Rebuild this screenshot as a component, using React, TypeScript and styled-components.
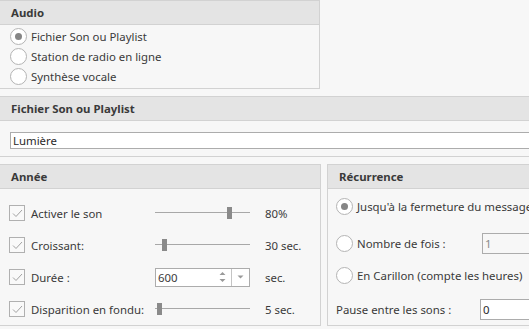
import React from "react";
import styled, { createGlobalStyle } from "styled-components";

const GlobalStyle = createGlobalStyle`
  html, body {
    margin: 0;
    padding: 0;
    background: #f7f7f7;
    overflow: hidden;
  }
  body {
    font-family: "Noto Sans", "Open Sans", sans-serif;
    font-size: 11.4px;
    color: #3a3a3a;
  }
`;

const Page = styled.div`
  width: 700px;
  margin-left: -1px;
  display: flex;
  flex-direction: column;
  gap: 7px;
`;

const Panel = styled.section<{ $width?: number }>`
  width: ${(p) => (p.$width ? `${p.$width}px` : "auto")};
  flex: ${(p) => (p.$width ? "none" : "1")};
  border: 1px solid #d2d2d2;
  background: #f7f7f7;
  box-sizing: border-box;
  overflow: hidden;
`;

const Header = styled.div`
  height: 23px;
  background: #e4e4e4;
  border-bottom: 1px solid #d2d2d2;
  display: flex;
  align-items: center;
  padding-left: 11px;
  font-weight: bold;
  color: #3a3a3a;
  font-size: 11.4px;
`;

const Body = styled.div<{ $pad: string }>`
  padding: ${(p) => p.$pad};
  display: flex;
  flex-direction: column;
`;

const Row = styled.div<{ $h: number; $mt?: number }>`
  height: ${(p) => p.$h}px;
  margin-top: ${(p) => p.$mt ?? 0}px;
  display: flex;
  align-items: center;
  white-space: nowrap;
`;

const Radio = styled.span<{ $on?: boolean }>`
  width: 15px;
  height: 15px;
  border-radius: 50%;
  border: 1px solid #b4b4b4;
  background: #fff;
  flex: none;
  display: flex;
  align-items: center;
  justify-content: center;
  margin-right: 4px;
  &::after {
    content: "";
    width: 7px;
    height: 7px;
    border-radius: 50%;
    background: ${(p) => (p.$on ? "#858585" : "transparent")};
  }
`;

const Check = styled.span`
  width: 14px;
  height: 14px;
  border: 1px solid #b0b0b0;
  background: #f9f9f9;
  flex: none;
  display: flex;
  align-items: center;
  justify-content: center;
  margin-right: 6px;
`;

const Label = styled.span<{ $w?: number }>`
  width: ${(p) => (p.$w ? `${p.$w}px` : "auto")};
  flex: none;
`;

const TextBox = styled.div<{ $w?: number; $disabled?: boolean }>`
  height: 19px;
  width: ${(p) => (p.$w ? `${p.$w}px` : "auto")};
  flex: ${(p) => (p.$w ? "none" : "1")};
  border: 1px solid #acacac;
  background: ${(p) => (p.$disabled ? "#f7f7f7" : "#fff")};
  color: ${(p) => (p.$disabled ? "#8a8a8a" : "#2a2a2a")};
  display: flex;
  align-items: center;
  padding-left: 2px;
`;

const Slider = styled.div`
  position: relative;
  width: 95px;
  height: 14px;
  flex: none;
  &::before {
    content: "";
    position: absolute;
    left: 0;
    right: 0;
    top: 6px;
    height: 1px;
    background: #a8a8a8;
  }
`;

const Thumb = styled.span`
  position: absolute;
  top: 1px;
  width: 5px;
  height: 12px;
  background: #8a8a8a;
`;

const Value = styled.span`
  margin-left: 15px;
`;

const Spin = styled.div`
  width: 93px;
  height: 17px;
  border: 1px solid #acacac;
  background: #fff;
  display: flex;
  align-items: center;
  flex: none;
`;

const SpinText = styled.span`
  flex: 1;
  padding-left: 2px;
`;

const SpinButtons = styled.span`
  width: 18px;
  display: flex;
  justify-content: center;
`;

const DropButton = styled.span`
  width: 17px;
  height: 100%;
  border-left: 1px solid #c4c4c4;
  display: flex;
  align-items: center;
  justify-content: center;
`;

const Columns = styled.div`
  display: flex;
  gap: 6px;
`;

const CheckMark = () => (
  <svg width="11" height="9" viewBox="0 0 11 9">
    <path d="M1 4.5 L4 7.5 L10 1" fill="none" stroke="#a2a2a2" strokeWidth="1" />
  </svg>
);

function SliderRow({ label, pos, value }: { label: string; pos: number; value: string }) {
  return (
    <Row $h={32}>
      <Check>
        <CheckMark />
      </Check>
      <Label $w={124}>{label}</Label>
      <Slider>
        <Thumb style={{ left: pos }} />
      </Slider>
      <Value>{value}</Value>
    </Row>
  );
}

export default function App() {
  return (
    <>
      <GlobalStyle />
      <Page>
        <Panel $width={321} style={{ height: 89 }}>
          <Header>Audio</Header>
          <Body $pad="1px 0 0 10px">
            <Row $h={20}>
              <Radio $on />
              Fichier Son ou Playlist
            </Row>
            <Row $h={20}>
              <Radio />
              Station de radio en ligne
            </Row>
            <Row $h={20}>
              <Radio />
              Synthèse vocale
            </Row>
          </Body>
        </Panel>

        <Panel>
          <Header>Fichier Son ou Playlist</Header>
          <Body $pad="11px 0 7px 10px">
            <TextBox>Lumière</TextBox>
          </Body>
        </Panel>

        <Columns>
          <Panel $width={322} style={{ height: 162 }}>
            <Header>Année</Header>
            <Body $pad="8px 0 0 9px">
              <SliderRow label="Activer le son" pos={72} value="80%" />
              <SliderRow label="Croissant:" pos={7} value="30 sec." />
              <Row $h={32}>
                <Check>
                  <CheckMark />
                </Check>
                <Label $w={124}>Durée :</Label>
                <Spin>
                  <SpinText>600</SpinText>
                  <SpinButtons>
                    <svg width="7" height="12" viewBox="0 0 7 12">
                      <path d="M3.5 1 L6.5 4 L0.5 4 Z M3.5 11 L6.5 8 L0.5 8 Z" fill="#9a9a9a" />
                    </svg>
                  </SpinButtons>
                  <DropButton>
                    <svg width="7" height="4" viewBox="0 0 7 4">
                      <path d="M0.5 0.5 L6.5 0.5 L3.5 3.5 Z" fill="#9a9a9a" />
                    </svg>
                  </DropButton>
                </Spin>
                <Value>sec.</Value>
              </Row>
              <SliderRow label="Disparition en fondu:" pos={2} value="5 sec." />
            </Body>
          </Panel>

          <Panel style={{ height: 162 }}>
            <Header>Récurrence</Header>
            <Body $pad="0 0 0 8px">
              <Row $h={20} $mt={7}>
                <Radio $on />
                Jusqu'à la fermeture du message d'alerte
              </Row>
              <Row $h={20} $mt={17}>
                <Radio />
                <Label $w={125}>Nombre de fois :</Label>
                <TextBox $w={80} $disabled>
                  1
                </TextBox>
              </Row>
              <Row $h={20} $mt={12}>
                <Radio />
                En Carillon (compte les heures)
              </Row>
              <Row $h={20} $mt={14}>
                <Label $w={144}>Pause entre les sons :</Label>
                <TextBox $w={80}>0</TextBox>
              </Row>
            </Body>
          </Panel>
        </Columns>
      </Page>
    </>
  );
}
